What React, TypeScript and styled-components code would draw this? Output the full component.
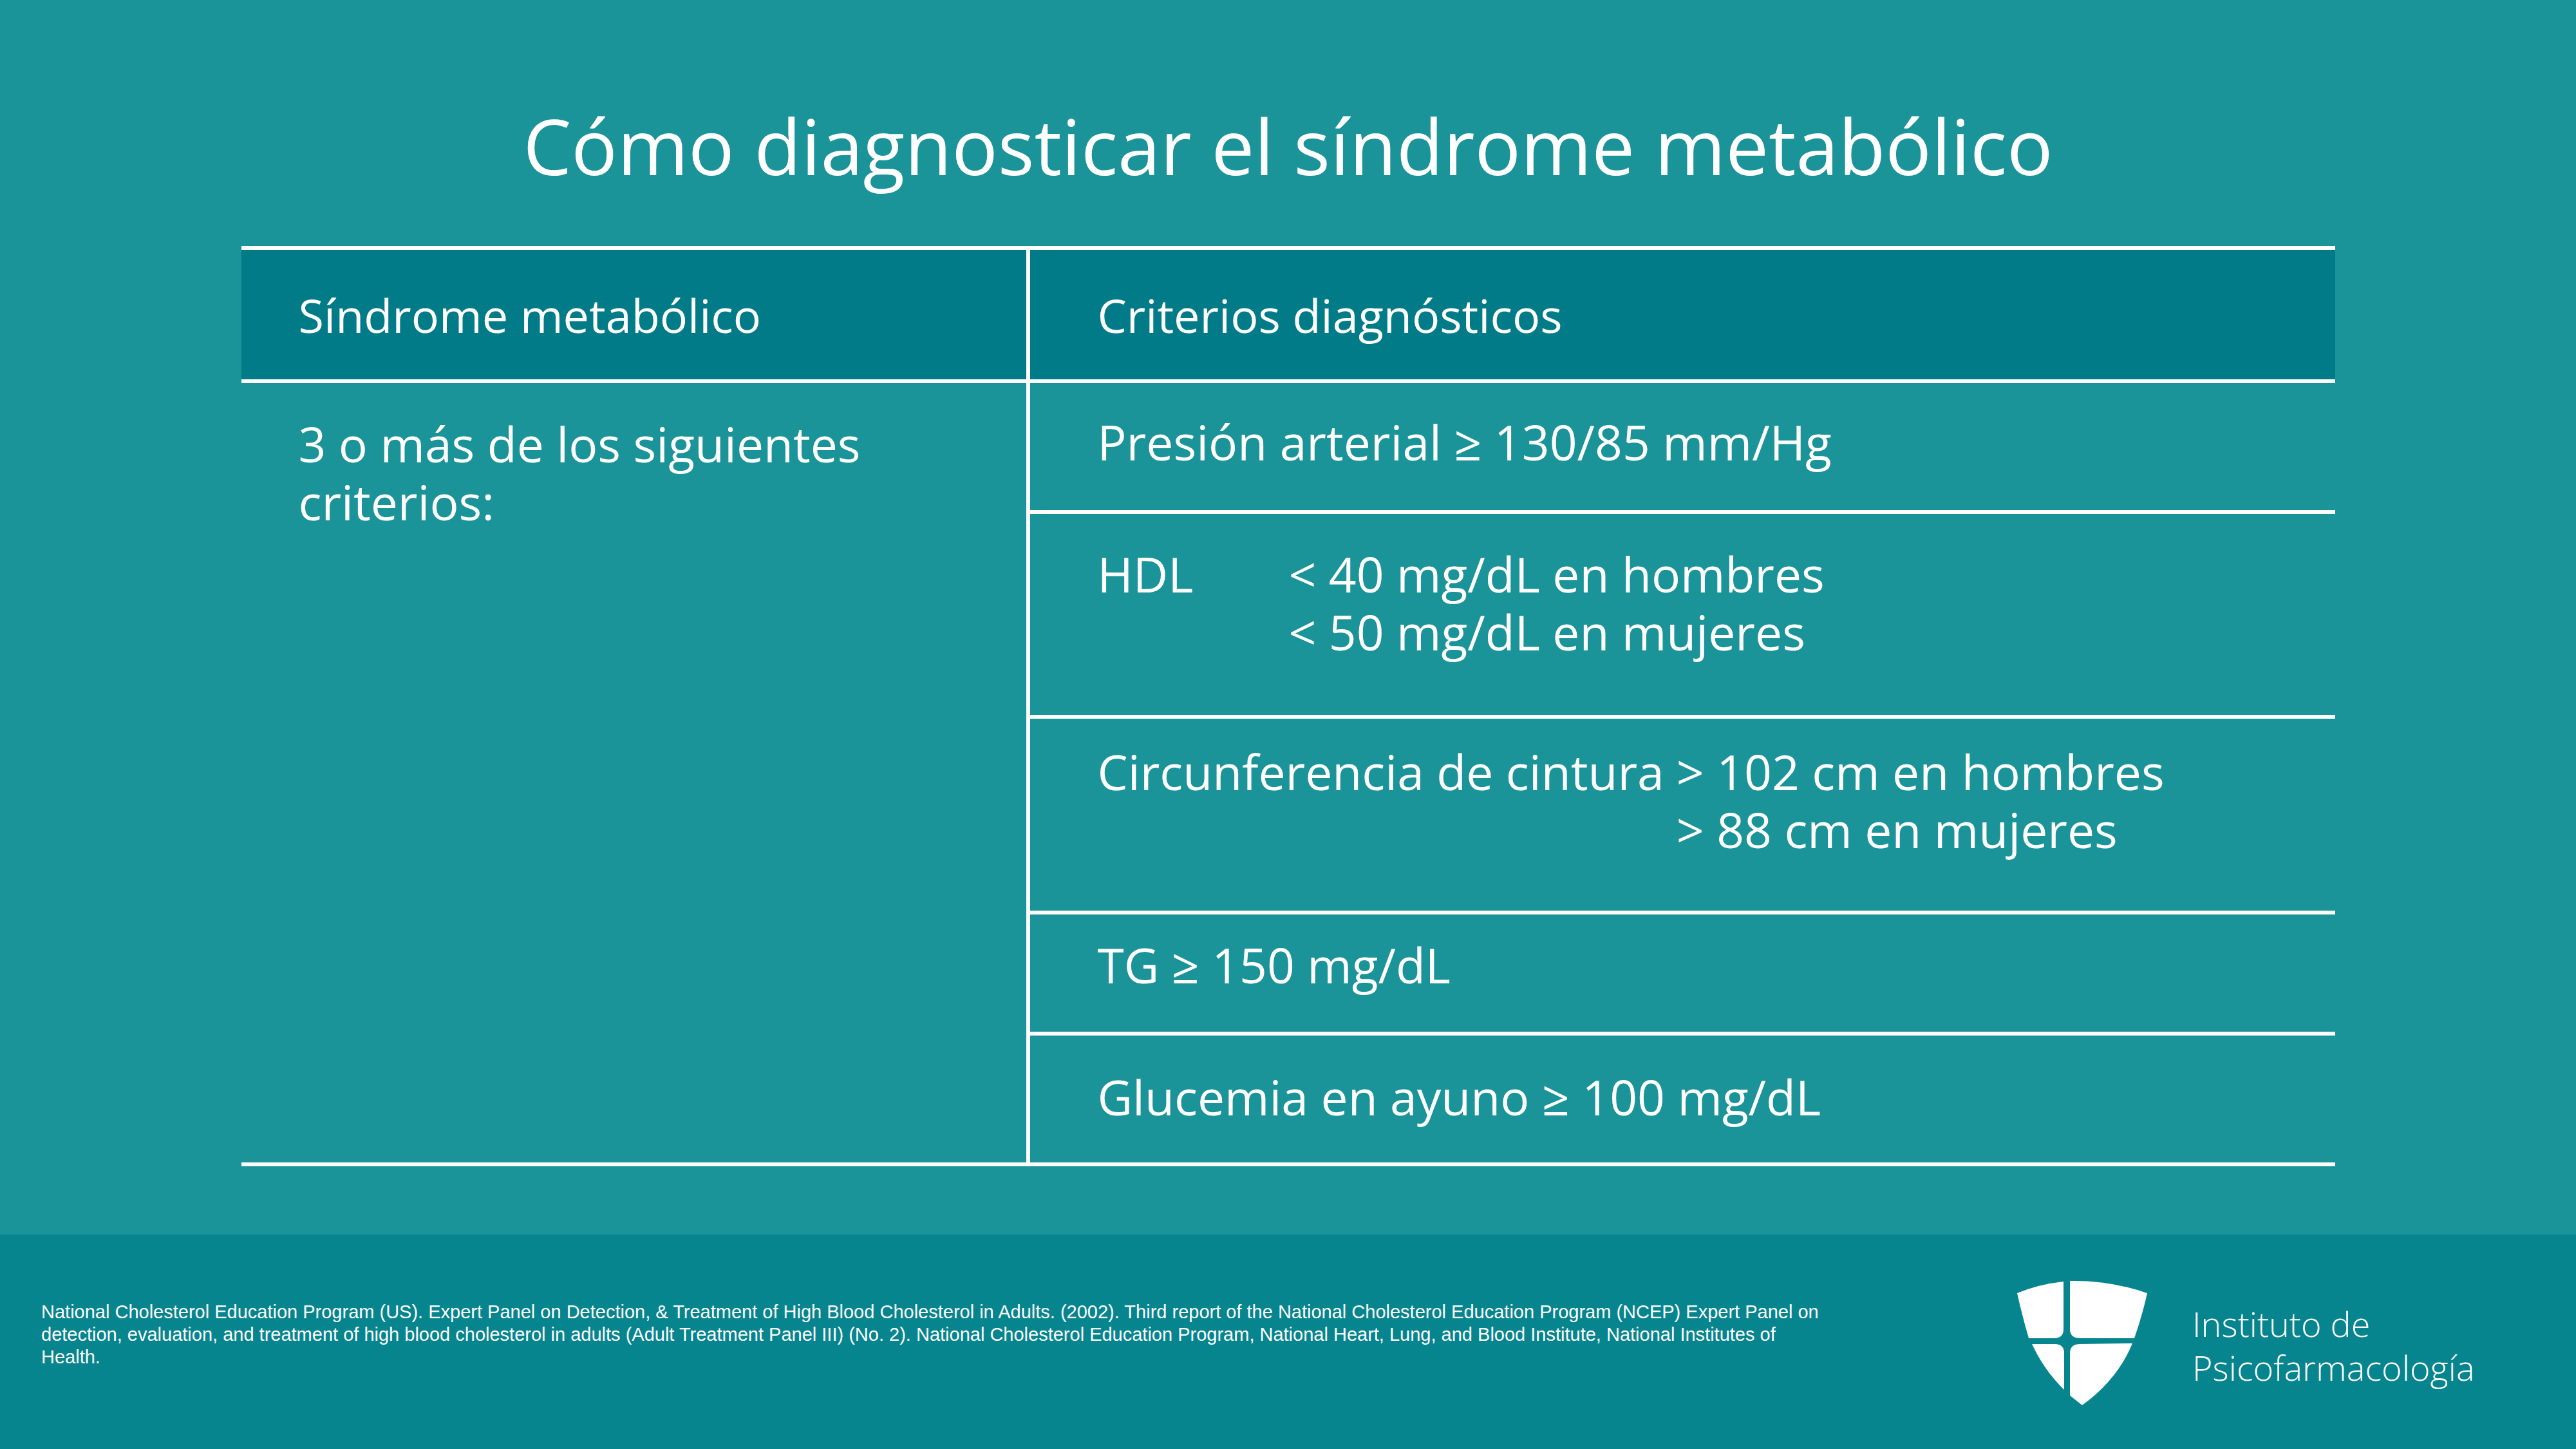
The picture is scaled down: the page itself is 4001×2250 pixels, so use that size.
import React from 'react';
import styled, { createGlobalStyle } from 'styled-components';

const GlobalStyle = createGlobalStyle`
  html, body {
    margin: 0;
    padding: 0;
    background: #1a9399;
  }
  * {
    box-sizing: border-box;
  }
`;

const colors = {
  page: '#1a9399',
  head: '#027b88',
  footer: '#07858f',
  white: '#ffffff',
};

const Slide = styled.div`
  width: 4001px;
  height: 2250px;
  display: flex;
  flex-direction: column;
  background-color: ${colors.page};
  color: ${colors.white};
  font-family: 'Open Sans', 'Noto Sans', sans-serif;
  overflow: hidden;
`;

const Main = styled.main`
  flex: 0 0 1917px;
  display: flex;
  flex-direction: column;
  align-items: center;
  padding-top: 154px;
`;

const Title = styled.h1`
  margin: 0;
  font-size: 119px;
  line-height: 144px;
  font-weight: 400;
  text-align: center;
`;

const Table = styled.div`
  width: 3252px;
  margin-top: 84px;
  border-top: 6px solid ${colors.white};
  display: flex;
  flex-direction: column;
`;

const HeadRow = styled.div`
  display: flex;
  height: 207px;
  background-color: ${colors.head};
  border-bottom: 6px solid ${colors.white};
`;

type CellProps = { $pad: number };

const HeadCell = styled.div<CellProps>`
  display: flex;
  align-items: center;
  padding-left: ${({ $pad }) => $pad}px;
  font-size: 72px;
  line-height: 100px;
`;

const LeftHead = styled(HeadCell)`
  flex: 0 0 1225px;
  border-right: 6px solid ${colors.white};
`;

const RightHead = styled(HeadCell)`
  flex: 1;
`;

const Body = styled.div`
  display: flex;
`;

const LeftCell = styled.div`
  flex: 0 0 1225px;
  border-right: 6px solid ${colors.white};
  border-bottom: 6px solid ${colors.white};
  padding: 49px 60px 0 89px;
  font-size: 75px;
  line-height: 90px;
`;

const RightColumn = styled.div`
  flex: 1;
  display: flex;
  flex-direction: column;
`;

type RowProps = { $height: number; $top: number };

const Row = styled.div<RowProps>`
  height: ${({ $height }) => $height + 6}px;
  padding: ${({ $top }) => $top}px 0 0 105px;
  border-bottom: 6px solid ${colors.white};
  font-size: 75px;
  line-height: 90px;
`;

type PairProps = { $label: string; $gap: number };

const Pair = styled.div<PairProps>`
  display: grid;
  grid-template-columns: ${({ $label }) => $label} max-content;
  column-gap: ${({ $gap }) => $gap}px;
`;

const Values = styled.div`
  white-space: nowrap;
`;

const Footer = styled.footer`
  flex: 1;
  background-color: ${colors.footer};
  display: grid;
  grid-template-columns: 3069px auto;
  align-items: start;
  padding-left: 64px;
`;

const Citation = styled.p`
  margin: 103px 0 0;
  max-width: 2785px;
  font-family: 'Liberation Sans', Arial, sans-serif;
  font-size: 29px;
  line-height: 35px;
`;

const Brand = styled.div`
  margin-top: 71px;
  display: flex;
  align-items: flex-start;
  gap: 70px;
`;

const BrandName = styled.div`
  margin-top: 33px;
  font-size: 54px;
  line-height: 68px;
  font-weight: 300;
`;

const Shield = () => (
  <svg width="202" height="194" viewBox="0 0 202 194" fill="#ffffff">
    <path d="M0 20 Q34 6 72 2 L72 76 Q72 89 59 90 L18 90 Q8 56 0 20 Z" />
    <path d="M82 1 Q146 0 202 20 Q194 56 182 90 L96 90 Q82 89 82 76 Z" />
    <path d="M23 99 L60 99 Q73 100 73 113 L73 170 Q42 140 23 99 Z" />
    <path d="M96 99 L179 98 Q156 154 101 194 L82 179 L82 113 Q82 100 96 99 Z" />
  </svg>
);

const rows = [
  { height: 197, top: 46 },
  { height: 312, top: 48 },
  { height: 298, top: 37 },
  { height: 182, top: 33 },
  { height: 197, top: 50 },
];

export default function App() {
  return (
    <Slide>
      <GlobalStyle />
      <Main>
        <Title>Cómo diagnosticar el síndrome metabólico</Title>
        <Table>
          <HeadRow>
            <LeftHead $pad={89}>Síndrome metabólico</LeftHead>
            <RightHead $pad={105}>Criterios diagnósticos</RightHead>
          </HeadRow>
          <Body>
            <LeftCell>3 o más de los siguientes criterios:</LeftCell>
            <RightColumn>
              <Row $height={rows[0].height} $top={rows[0].top}>
                Presión arterial ≥ 130/85 mm/Hg
              </Row>
              <Row $height={rows[1].height} $top={rows[1].top}>
                <Pair $label="297px" $gap={0}>
                  <span>HDL</span>
                  <Values>
                    &lt; 40 mg/dL en hombres
                    <br />
                    &lt; 50 mg/dL en mujeres
                  </Values>
                </Pair>
              </Row>
              <Row $height={rows[2].height} $top={rows[2].top}>
                <Pair $label="max-content" $gap={19}>
                  <span>Circunferencia de cintura</span>
                  <Values>
                    &gt; 102 cm en hombres
                    <br />
                    &gt; 88 cm en mujeres
                  </Values>
                </Pair>
              </Row>
              <Row $height={rows[3].height} $top={rows[3].top}>
                TG ≥ 150 mg/dL
              </Row>
              <Row $height={rows[4].height} $top={rows[4].top}>
                Glucemia en ayuno ≥ 100 mg/dL
              </Row>
            </RightColumn>
          </Body>
        </Table>
      </Main>
      <Footer>
        <Citation>
          National Cholesterol Education Program (US). Expert Panel on Detection, &amp; Treatment of High Blood
          Cholesterol in Adults. (2002). Third report of the National Cholesterol Education Program (NCEP) Expert Panel
          on detection, evaluation, and treatment of high blood cholesterol in adults (Adult Treatment Panel III) (No.
          2). National Cholesterol Education Program, National Heart, Lung, and Blood Institute, National Institutes of
          Health.
        </Citation>
        <Brand>
          <Shield />
          <BrandName>
            Instituto de
            <br />
            Psicofarmacología
          </BrandName>
        </Brand>
      </Footer>
    </Slide>
  );
}
